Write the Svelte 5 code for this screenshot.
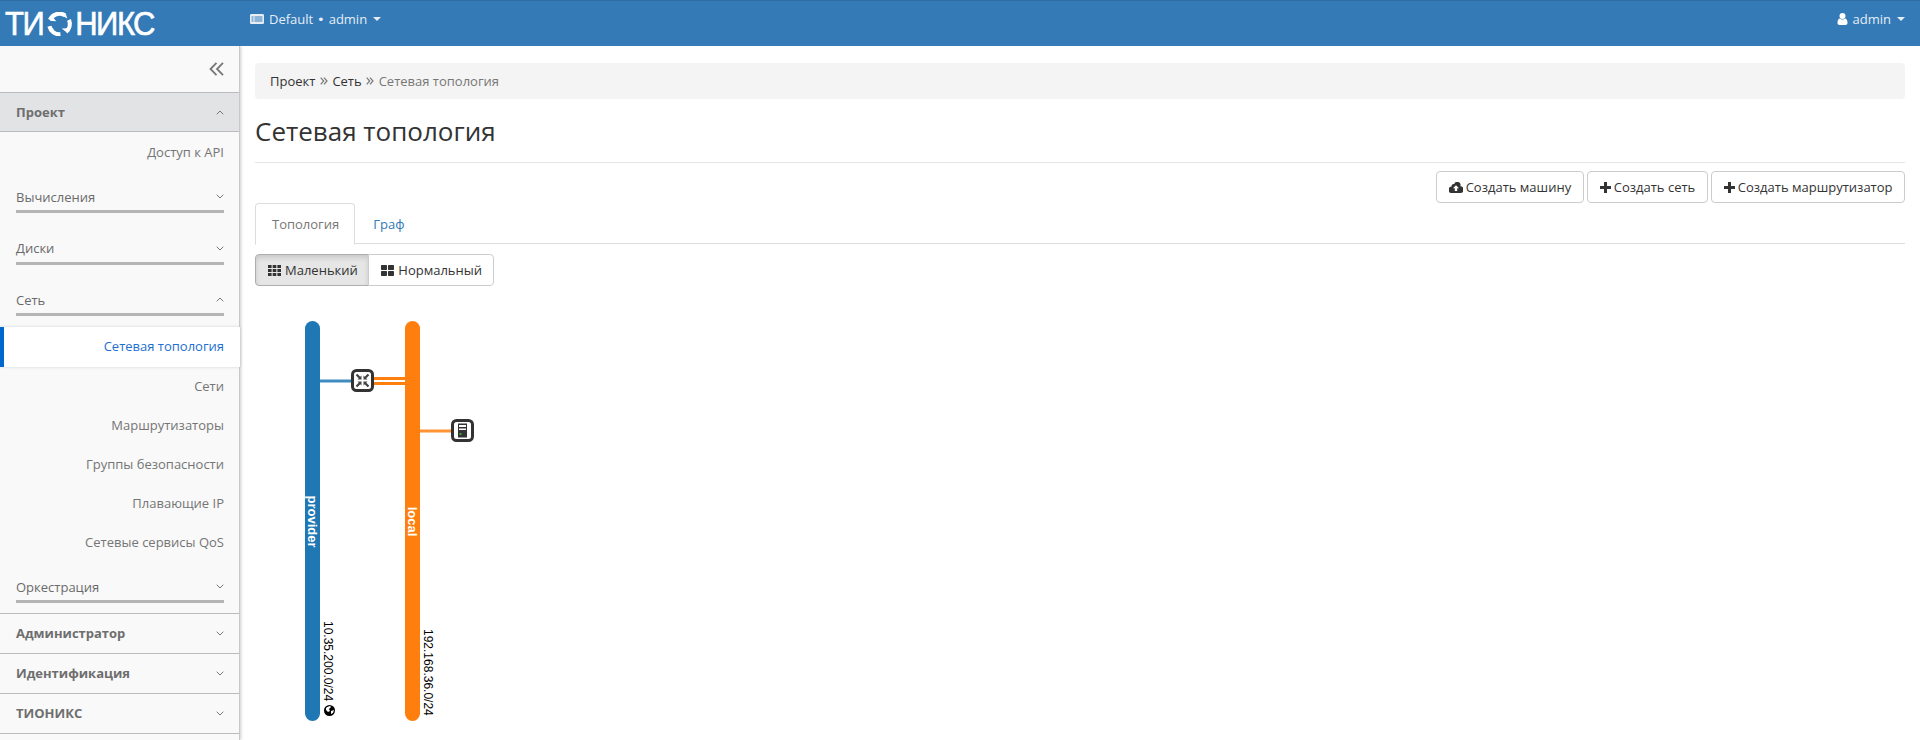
<script>
  const groups = [
    { label: 'Вычисления', open: false },
    { label: 'Диски', open: false },
    { label: 'Сеть', open: true }
  ];
  const netLinks = ['Сети', 'Маршрутизаторы', 'Группы безопасности', 'Плавающие IP', 'Сетевые сервисы QoS'];
  const sections = ['Администратор', 'Идентификация', 'ТИОНИКС'];
</script>

{#snippet chevron(up)}
  <svg class="chev" width="8" height="5" viewBox="0 0 8 5">
    <path d={up ? 'M.7 4.3 4 1l3.3 3.3' : 'M.7.7 4 4 7.3.7'} fill="none" stroke="currentColor" stroke-width="1" />
  </svg>
{/snippet}

{#snippet sep()}
  <svg class="sep" width="8" height="8" viewBox="0 0 8 8">
    <path d="M.7.7 3.700 4 .7 7.300M4 .7 7 4 4 7.300" fill="none" stroke="#777" stroke-width="1.200" />
  </svg>
{/snippet}

<div class="page">
  <header class="topbar">
    <div class="logo">
      <span>ТИ</span>
      <svg class="logo-o" width="27" height="24" viewBox="0 0 27 26">
        <g fill="none" stroke="#fff" stroke-width="4.500">
          <path d="M3.200 8.500A11 11 0 0 1 19 3.500" />
          <path d="M23.800 8.500A11 11 0 0 1 20.500 21.500" />
          <path d="M14.500 24A11 11 0 0 1 2.600 15.500" />
        </g>
        <path d="M3 9.500 10 10 6.500 6ZM18 5l2-4 2 6ZM20 21l-4-3 6-.5ZM3 15l4 3.500L2 19Z" fill="#fff" />
      </svg>
      <span>НИКС</span>
    </div>
    <div class="project">
      <svg width="14" height="12" viewBox="0 0 14 12">
        <path d="M0 2.500C0 1.500.6 1 1.500 1h11c.9 0 1.500.5 1.500 1.500v7c0 1-.6 1.500-1.500 1.500h-11C.6 11 0 10.500 0 9.500ZM1.500 3.500v1h2v-1Zm3 0v1h8v-1Zm-3 2v1h2v-1Zm3 0v1h8v-1Zm-3 2v1h2v-1Zm3 0v1h8v-1Z" fill="#e6edf5" fill-rule="evenodd" />
      </svg>
      <span class="project-name">Default <span class="dot">•</span> admin</span>
      <i class="caret"></i>
    </div>
    <div class="user">
      <svg width="11" height="12" viewBox="0 0 10 12">
        <circle cx="5" cy="3" r="3" fill="#fff" />
        <path d="M0 10c0-3 1-4.500 2.500-4.500C3.500 6.300 4 6.500 5 6.500s1.500-.2 2.500-1C9 5.500 10 7 10 10c0 1.200-.8 2-2 2H2c-1.200 0-2-.8-2-2Z" fill="#fff" />
      </svg>
      <span>admin</span>
      <i class="caret"></i>
    </div>
  </header>

  <div class="body">
    <aside class="sidebar">
      <div class="collapse">
        <svg width="15" height="14" viewBox="0 0 15 14">
          <path d="M7.500 .8 1.500 7l6 6.200M14 .8 8 7l6 6.200" fill="none" stroke="#777" stroke-width="1.800" />
        </svg>
      </div>
      <div class="section open">
        <span>Проект</span>
        {@render chevron(true)}
      </div>
      <a class="link api">Доступ к API</a>
      {#each groups as g}
        <div class="group">
          <span>{g.label}</span>
          {@render chevron(g.open)}
        </div>
      {/each}
      <a class="link active">Сетевая топология</a>
      {#each netLinks as l}
        <a class="link">{l}</a>
      {/each}
      <div class="group last">
        <span>Оркестрация</span>
        {@render chevron(false)}
      </div>
      {#each sections as s}
        <div class="section">
          <span>{s}</span>
          {@render chevron(false)}
        </div>
      {/each}
    </aside>

    <main class="content">
      <nav class="crumbs">
        <span class="c-link">Проект</span>
        {@render sep()}
        <span class="c-link">Сеть</span>
        {@render sep()}
        <span class="c-cur">Сетевая топология</span>
      </nav>
      <h1>Сетевая топология</h1>

      <div class="actions">
        <button class="btn">
          <svg width="14" height="11" viewBox="0 0 14 11">
            <path d="M11.300 4.300A3.200 3.200 0 0 0 5.200 2 2.300 2.300 0 0 0 2.500 4.400 3.200 3.200 0 0 0 3.200 11h8a3.300 3.300 0 0 0 .1-6.700ZM7 3.200 10 6.300H8.200V9H5.800V6.300H4Z" fill="#333" fill-rule="evenodd" />
          </svg>
          Создать машину
        </button>
        <button class="btn"><svg width="11" height="11" viewBox="0 0 11 11"><path d="M4 0h3v4h4v3H7v4H4V7H0V4h4Z" fill="#333" /></svg> Создать сеть</button>
        <button class="btn"><svg width="11" height="11" viewBox="0 0 11 11"><path d="M4 0h3v4h4v3H7v4H4V7H0V4h4Z" fill="#333" /></svg> Создать маршрутизатор</button>
      </div>

      <div class="tabs">
        <span class="tab active">Топология</span>
        <span class="tab">Граф</span>
      </div>

      <div class="sizes">
        <button class="btn seg on">
          <svg width="13" height="11" viewBox="0 0 13 11">
            <path d="M0 0h3.600v3H0Zm4.700 0h3.600v3H4.700Zm4.700 0H13v3H9.400ZM0 4h3.600v3H0Zm4.700 0h3.600v3H4.700Zm4.700 0H13v3H9.400ZM0 8h3.600v3H0Zm4.700 0h3.600v3H4.700Zm4.700 0H13v3H9.400Z" fill="#333" />
          </svg>
          Маленький
        </button>
        <button class="btn seg">
          <svg width="13" height="11" viewBox="0 0 13 11">
            <path d="M0 1c0-.6.4-1 1-1h4c.6 0 1 .4 1 1v3c0 .6-.4 1-1 1H1c-.6 0-1-.4-1-1Zm7 0c0-.6.4-1 1-1h4c.6 0 1 .4 1 1v3c0 .6-.4 1-1 1H8c-.6 0-1-.4-1-1ZM0 7c0-.6.4-1 1-1h4c.6 0 1 .4 1 1v3c0 .6-.4 1-1 1H1c-.6 0-1-.4-1-1Zm7 0c0-.6.4-1 1-1h4c.6 0 1 .4 1 1v3c0 .6-.4 1-1 1H8c-.6 0-1-.4-1-1Z" fill="#333" />
          </svg>
          Нормальный
        </button>
      </div>

      <svg class="topology" width="220" height="410" viewBox="0 0 220 410">
        <!-- links -->
        <line x1="60" y1="70" x2="98" y2="70" stroke="#1f77b4" stroke-width="3" stroke-opacity=".85" />
        <line x1="117" y1="67.500" x2="155" y2="67.500" stroke="#ff7f0e" stroke-width="3" />
        <line x1="117" y1="72.500" x2="155" y2="72.500" stroke="#ff7f0e" stroke-width="3" />
        <line x1="160" y1="120" x2="198" y2="120" stroke="#ff7f0e" stroke-width="3" stroke-opacity=".85" />

        <!-- networks -->
        <rect x="50" y="10" width="15" height="400" rx="7.500" fill="#1f77b4" />
        <rect x="150" y="10" width="15" height="400" rx="7.500" fill="#ff7f0e" />
        <text class="net-name" transform="translate(53 210.500) rotate(90)" text-anchor="middle">provider</text>
        <text class="net-name" transform="translate(153 210.500) rotate(90)" text-anchor="middle">local</text>
        <text class="cidr" transform="translate(69 310) rotate(90)">10.35.200.0/24</text>
        <text class="cidr" transform="translate(169 318) rotate(90)">192.168.36.0/24</text>

        <!-- globe -->
        <circle cx="74.500" cy="399.500" r="5.500" fill="#000" />
        <path d="M71 397c1-1 3-2 4-2l1 1-2 2 1 2-2 1-2-2ZM76 400l3-1-1 3-2 1Z" fill="#fff" />

        <!-- router -->
        <g transform="translate(96 58)">
          <rect x="1.500" y="1.500" width="20" height="20" rx="4" fill="#fff" stroke="#333" stroke-width="3" />
          <path d="M5.500 5.500 9 9M17.500 5.500 14 9M5.500 17.500 9 14M17.500 17.500 14 14" stroke="#444" stroke-width="2.200" />
          <path d="M10.500 6.500v4h-4ZM12.500 6.500v4h4ZM10.500 16.500v-4h-4ZM12.500 16.500v-4h4Z" fill="#444" />
        </g>

        <!-- instance -->
        <g transform="translate(196 108)">
          <rect x="1.500" y="1.500" width="20" height="20" rx="4" fill="#fff" stroke="#333" stroke-width="3" />
          <rect x="7" y="4.500" width="9" height="14" fill="#333" />
          <rect x="8" y="6" width="7" height="2" fill="#fff" />
          <rect x="8" y="9.500" width="7" height="1.500" fill="#fff" />
          <rect x="8.500" y="14" width="2" height="2" fill="#3a3" />
        </g>
      </svg>
    </main>
  </div>
</div>

<style>
  :global(body) {
    margin: 0;
    background: #fff;
  }

  .page {
    height: 740px;
    overflow: hidden;
    font-family: "Open Sans", sans-serif;
    font-size: 13px;
    color: #333;
  }

  .topbar {
    height: 46px;
    box-sizing: border-box;
    background: #337ab7;
    border-top: 1px solid #2e6da4;
    padding-bottom: 10px;
    display: flex;
    align-items: center;
    color: #e6edf5;
    position: relative;
    z-index: 2;
  }

  .logo {
    width: 250px;
    height: 26px;
    margin-top: 10px;
    padding-left: 5px;
    box-sizing: border-box;
    display: flex;
    align-items: center;
    font-family: "Liberation Sans", sans-serif;
    font-size: 31px;
    letter-spacing: -1.5px;
    color: #fff;
    -webkit-text-stroke: 0.6px #fff;
  }

  .logo span {
    display: inline-block;
    transform: scaleY(1.1);
  }

  .logo-o {
    margin: 0 2px 0 3px;
    flex: none;
  }

  .project {
    display: flex;
    align-items: center;
    gap: 5px;
  }

  .project-name {
    word-spacing: 0.5px;
  }

  .dot {
    font-family: "DejaVu Sans", sans-serif;
  }

  .user {
    margin-left: auto;
    padding-right: 15px;
    display: flex;
    align-items: center;
    gap: 5px;
  }

  .caret {
    width: 0;
    height: 0;
    border-top: 4px solid currentColor;
    border-left: 4px solid transparent;
    border-right: 4px solid transparent;
    margin-left: 1px;
  }

  .body {
    display: flex;
    height: 694px;
  }

  .sidebar {
    width: 240px;
    flex: none;
    box-sizing: border-box;
    background: #f9f9f9;
    border-right: 1px solid #c8c8c8;
    box-shadow: 1px 0 3px rgba(0, 0, 0, 0.2);
    color: #6e6e6e;
  }

  .collapse {
    height: 46px;
    box-sizing: border-box;
    display: flex;
    align-items: center;
    justify-content: flex-end;
    padding-right: 15px;
  }

  .section {
    height: 40px;
    box-sizing: border-box;
    display: flex;
    align-items: center;
    justify-content: space-between;
    padding: 0 15px 1px 16px;
    font-weight: 700;
    border-bottom: 1px solid #bbb;
  }

  .section.open {
    background: #e2e3e5;
    border-top: 1px solid #bbb;
    padding-bottom: 0;
  }

  .link {
    display: block;
    height: 39px;
    line-height: 38px;
    text-align: right;
    padding-right: 15px;
    color: #757575;
  }

  .link.api {
    height: 40px;
    line-height: 40px;
  }

  .link.active {
    background: #fff;
    color: #1d6fd1;
    border-left: 4px solid #0067cc;
    width: 240px;
    box-sizing: border-box;
    margin-top: 11px;
    padding-right: 16px;
    height: 40px;
    line-height: 39px;
    box-shadow: 0 0 3px rgba(0, 0, 0, 0.15);
    position: relative;
  }

  .group {
    height: 24px;
    margin: 27.5px 15px 0 16px;
    box-sizing: border-box;
    display: flex;
    align-items: center;
    justify-content: space-between;
    border-bottom: 3px solid #b5b5b5;
    padding-bottom: 6px;
    color: #6a6a6a;
  }

  .link.api + .group,
  .group.last {
    margin-top: 17px;
  }

  .group.last {
    margin-bottom: 10px;
  }

  .group.last + .section {
    border-top: 1px solid #bbb;
    height: 41px;
  }

  .chev {
    color: #777;
    flex: none;
  }

  .content {
    flex: 1;
    min-width: 0;
    padding: 17px 15px 0;
  }

  .crumbs {
    height: 36px;
    box-sizing: border-box;
    background: #f4f4f4;
    border-radius: 4px;
    padding: 0 15px;
    display: flex;
    align-items: center;
  }

  .c-link {
    color: #333;
  }

  .c-cur {
    color: #777;
  }

  .sep {
    margin: 0 4.5px;
  }

  h1 {
    margin: 0;
    height: 64px;
    box-sizing: border-box;
    padding-top: 14px;
    font-size: 26px;
    line-height: 36px;
    font-weight: 400;
    color: #333;
    border-bottom: 1px solid #e7e7e7;
  }

  .actions {
    display: flex;
    justify-content: flex-end;
    gap: 3.6px;
    margin-top: 8px;
  }

  .actions .btn {
    padding: 0 11.5px;
  }

  .btn {
    height: 32px;
    box-sizing: border-box;
    padding: 0 12px;
    font: inherit;
    color: #333;
    background: #fff;
    border: 1px solid #ccc;
    border-radius: 4px;
    display: flex;
    align-items: center;
    gap: 3px;
  }

  .tabs {
    display: flex;
    height: 41px;
    box-sizing: border-box;
    border-bottom: 1px solid #ddd;
  }

  .tab {
    padding: 0 15px;
    margin-left: 2px;
    height: 40px;
    line-height: 40px;
    color: #337ab7;
    border: 1px solid transparent;
  }

  .tab.active {
    padding-left: 16px;
    margin-left: 0;
    color: #777;
    background: #fff;
    border-color: #ddd;
    border-bottom-color: #fff;
    border-radius: 4px 4px 0 0;
  }

  .sizes {
    display: flex;
    margin-top: 10px;
  }

  .seg {
    gap: 4px;
    padding: 0 10.5px 0 12px;
  }

  .seg:first-child {
    border-radius: 4px 0 0 4px;
  }

  .seg:last-child {
    border-radius: 0 4px 4px 0;
    margin-left: -1px;
  }

  .seg.on {
    background: #e6e6e6;
    border-color: #adadad;
    box-shadow: inset 0 3px 5px rgba(0, 0, 0, 0.125);
  }

  .topology {
    display: block;
    margin-top: 25px;
    overflow: visible;
  }

  .net-name {
    font-family: "Liberation Sans", sans-serif;
    font-size: 13px;
    font-weight: 700;
    fill: #fff;
  }

  .cidr {
    font-family: "Liberation Sans", sans-serif;
    font-size: 12px;
    fill: #000;
  }
</style>
